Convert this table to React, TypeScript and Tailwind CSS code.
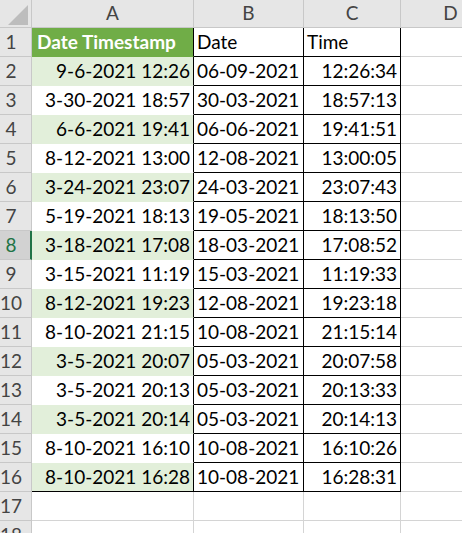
import React from "react";

const rows: [string, string, string][] = [
  ["9-6-2021 12:26", "06-09-2021", "12:26:34"],
  ["3-30-2021 18:57", "30-03-2021", "18:57:13"],
  ["6-6-2021 19:41", "06-06-2021", "19:41:51"],
  ["8-12-2021 13:00", "12-08-2021", "13:00:05"],
  ["3-24-2021 23:07", "24-03-2021", "23:07:43"],
  ["5-19-2021 18:13", "19-05-2021", "18:13:50"],
  ["3-18-2021 17:08", "18-03-2021", "17:08:52"],
  ["3-15-2021 11:19", "15-03-2021", "11:19:33"],
  ["8-12-2021 19:23", "12-08-2021", "19:23:18"],
  ["8-10-2021 21:15", "10-08-2021", "21:15:14"],
  ["3-5-2021 20:07", "05-03-2021", "20:07:58"],
  ["3-5-2021 20:13", "05-03-2021", "20:13:33"],
  ["3-5-2021 20:14", "05-03-2021", "20:14:13"],
  ["8-10-2021 16:10", "10-08-2021", "16:10:26"],
  ["8-10-2021 16:28", "10-08-2021", "16:28:31"],
];

const font = { fontFamily: "Lato, 'Open Sans', sans-serif" };

export default function App() {
  return (
    <div
      className="w-[462px] h-[533px] overflow-hidden bg-white text-[19px] text-black"
      style={font}
    >
      <div className="grid grid-cols-[32px_162px_110px_97px_100px] grid-rows-[28px_repeat(18,29px)]">
        {/* header row */}
        <div className="relative bg-[#e6e6e6] border-r border-b border-[#c8c8c8]">
          <svg className="absolute left-[8px] top-[5px]" width="20" height="20" viewBox="0 0 20 20">
            <polygon points="20,0 20,20 0,20" fill="#bdbdbd" />
          </svg>
        </div>
        {["A", "B", "C", "D"].map((c) => (
          <div
            key={c}
            className="bg-[#e6e6e6] border-r border-b border-[#c8c8c8] flex items-center justify-center text-[#444]"
          >
            {c}
          </div>
        ))}

        {/* row 1 */}
        <div className="bg-[#e6e6e6] border-r border-b border-[#c8c8c8] flex items-center justify-center pr-[9px] text-[#444]">
          1
        </div>
        <div className="bg-[#70ad47] border-r border-b border-r-black border-b-[#70ad47] flex items-center pl-[5px] font-bold text-white">
          Date Timestamp
        </div>
        <div className="border-r border-b border-black flex items-center pl-[3px]">Date</div>
        <div className="border-r border-b border-black flex items-center pl-[3px]">Time</div>
        <div className="border-r border-b border-[#d4d4d4]" />

        {rows.map((r, i) => {
          const n = i + 2;
          const green = n % 2 === 0;
          const last = n === 16;
          const sel = n === 8;
          return (
            <React.Fragment key={n}>
              <div
                className={
                  sel
                    ? "bg-[#d2d2d2] border-r-2 border-b border-r-[#217346] border-b-[#c8c8c8] flex items-center justify-center pr-[8px] text-[#217346]"
                    : "bg-[#e6e6e6] border-r border-b border-[#c8c8c8] flex items-center justify-center pr-[9px] text-[#444]"
                }
              >
                {n}
              </div>
              <div
                className={
                  (green ? "bg-[#e2efda] " : "bg-white ") +
                  "border-r border-b border-r-black flex items-center justify-end pr-[3px] " +
                  (last ? "border-b-black" : green ? "border-b-[#e2efda]" : "border-b-white")
                }
              >
                {r[0]}
              </div>
              <div className="border-r border-b border-black flex items-center pl-[3px]">{r[1]}</div>
              <div className="border-r border-b border-black flex items-center justify-end pr-[3px]">{r[2]}</div>
              <div className="border-r border-b border-[#d4d4d4]" />
            </React.Fragment>
          );
        })}

        {[17, 18].map((n) => (
          <React.Fragment key={n}>
            <div className="bg-[#e6e6e6] border-r border-b border-[#c8c8c8] flex items-center justify-center pr-[9px] text-[#444]">
              {n}
            </div>
            <div className="border-r border-b border-[#d4d4d4]" />
            <div className="border-r border-b border-[#d4d4d4]" />
            <div className="border-r border-b border-[#d4d4d4]" />
            <div className="border-r border-b border-[#d4d4d4]" />
          </React.Fragment>
        ))}
      </div>
    </div>
  );
}
